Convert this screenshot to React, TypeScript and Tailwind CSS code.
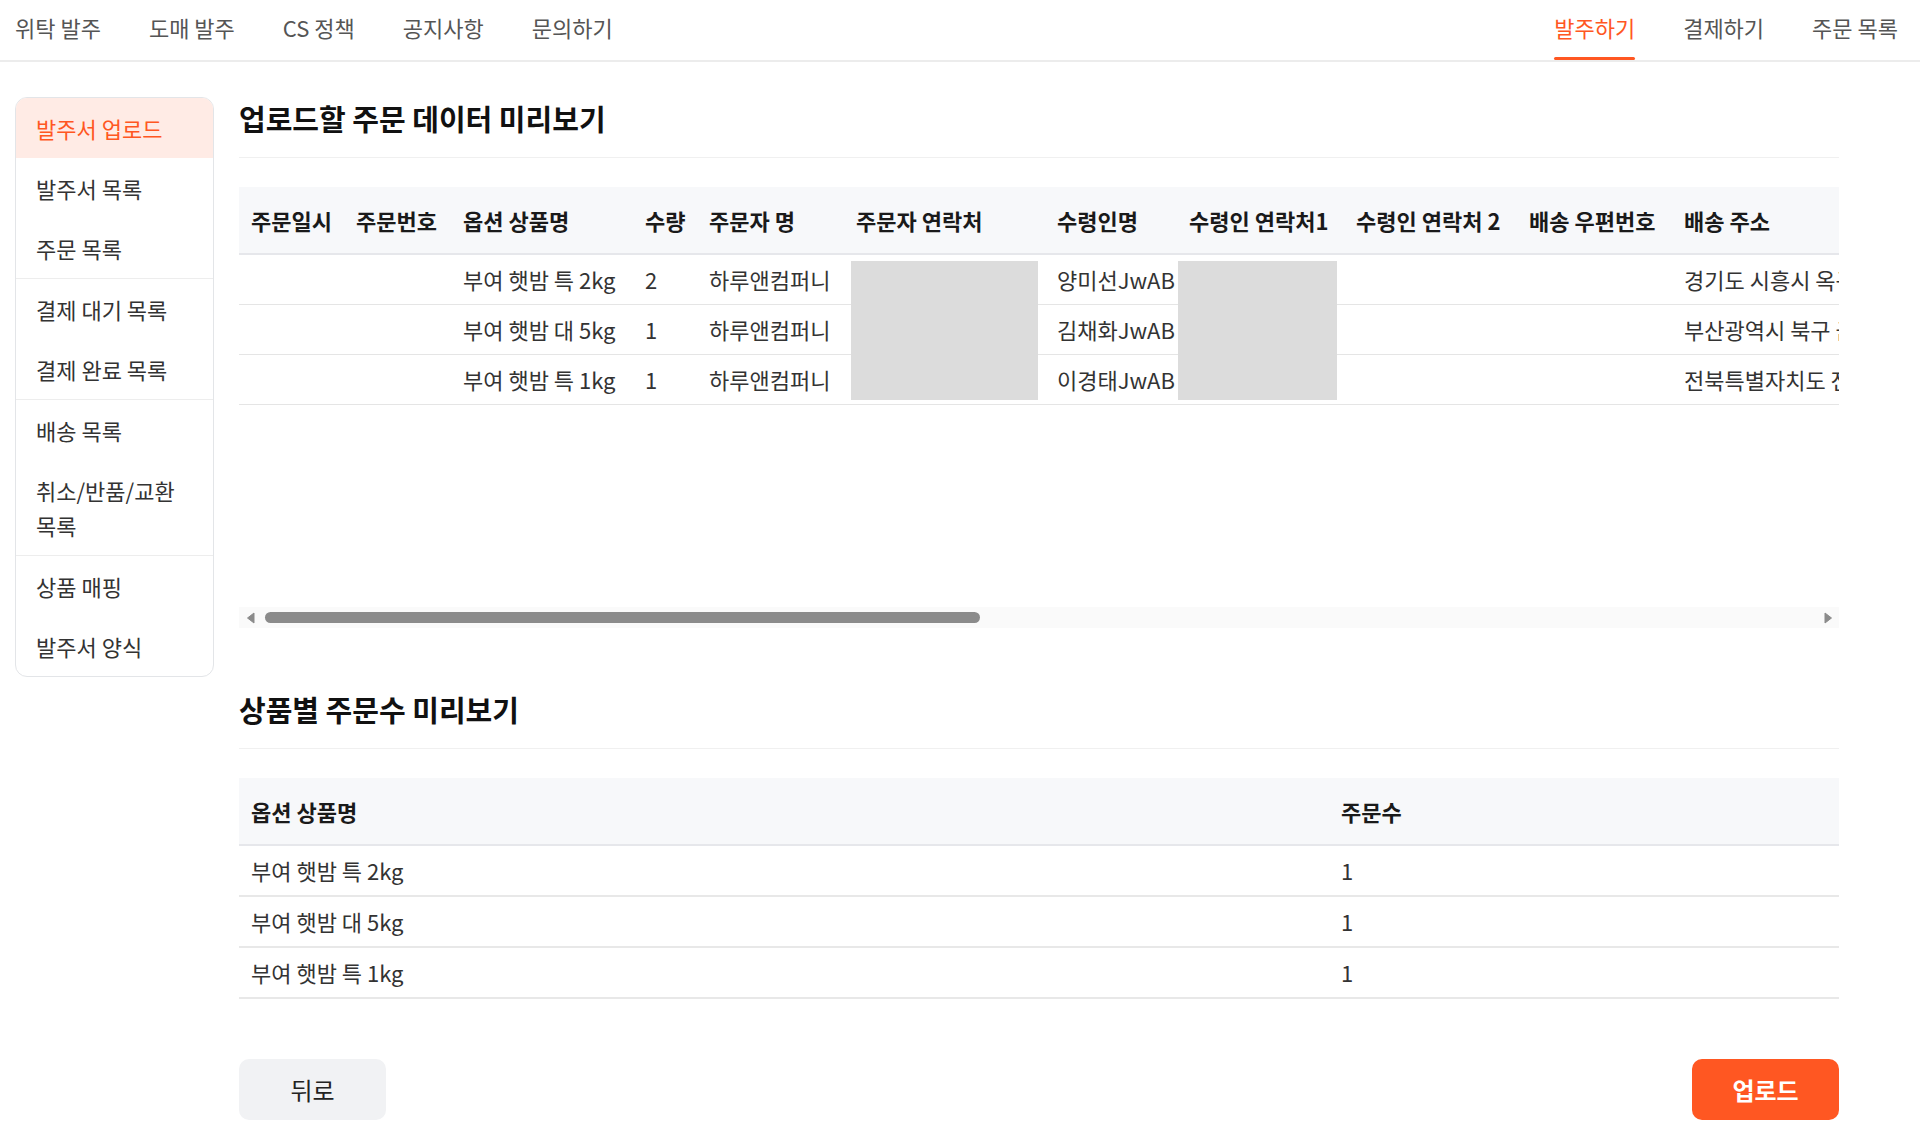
import React from 'react'

const FONT = { fontFamily: '"Noto Sans CJK KR", "Noto Sans", sans-serif' }

const leftNav = ['위탁 발주', '도매 발주', 'CS 정책', '공지사항', '문의하기']
const rightNav = ['발주하기', '결제하기', '주문 목록']

const sideGroups: string[][] = [
  ['발주서 업로드', '발주서 목록', '주문 목록'],
  ['결제 대기 목록', '결제 완료 목록'],
  ['배송 목록', '취소/반품/교환 목록'],
  ['상품 매핑', '발주서 양식'],
]

// 미리보기 테이블 컬럼 (폭은 px)
const columns = [
  { label: '주문일시', w: 'w-[105px]' },
  { label: '주문번호', w: 'w-[107px]' },
  { label: '옵션 상품명', w: 'w-[182px]' },
  { label: '수량', w: 'w-[64px]' },
  { label: '주문자 명', w: 'w-[147px]' },
  { label: '주문자 연락처', w: 'w-[201px]' },
  { label: '수령인명', w: 'w-[132px]' },
  { label: '수령인 연락처1', w: 'w-[167px]' },
  { label: '수령인 연락처 2', w: 'w-[173px]' },
  { label: '배송 우편번호', w: 'w-[155px]' },
  { label: '배송 주소', w: 'w-[420px]' },
  { label: '배송 메시지', w: 'w-[240px]' },
]

const rows = [
  ['', '', '부여 햇밤 특 2kg', '2', '하루앤컴퍼니', '', '양미선JwAB', '', '', '', '경기도 시흥시 옥구천서로 123', ''],
  ['', '', '부여 햇밤 대 5kg', '1', '하루앤컴퍼니', '', '김채화JwAB', '', '', '', '부산광역시 북구 금곡대로 45', ''],
  ['', '', '부여 햇밤 특 1kg', '1', '하루앤컴퍼니', '', '이경태JwAB', '', '', '', '전북특별자치도 전주시 완산구 67', ''],
]

const summary = [
  ['부여 햇밤 특 2kg', '1'],
  ['부여 햇밤 대 5kg', '1'],
  ['부여 햇밤 특 1kg', '1'],
]

function TopNav() {
  return (
    <div className="h-[62px] border-b-2 border-[#ececec] flex justify-between pl-[15px] pr-[22px]">
      <div className="flex gap-12">
        {leftNav.map((item) => (
          <span key={item} className="h-[60px] flex items-center pb-[6px] text-[22px] text-[#555]">
            {item}
          </span>
        ))}
      </div>
      <div className="flex gap-12">
        {rightNav.map((item, i) => (
          <span
            key={item}
            className={`relative h-[60px] flex items-center pb-[6px] text-[22px] ${
              i === 0 ? 'text-[#ff5722]' : 'text-[#555]'
            }`}
          >
            {item}
            {i === 0 && <span className="absolute left-0 right-0 bottom-0 h-[3px] rounded-full bg-[#ff5722]" />}
          </span>
        ))}
      </div>
    </div>
  )
}

function Sidebar() {
  return (
    <div className="w-[199px] self-start border border-[#e3e5e8] rounded-[12px] overflow-hidden bg-white">
      {sideGroups.map((group, gi) => (
        <div key={gi} className={gi > 0 ? 'border-t border-[#ededed]' : ''}>
          {group.map((item) => {
            const active = item === '발주서 업로드'
            return (
              <div
                key={item}
                className={`px-[20px] py-[12.5px] leading-[35px] text-[22px] break-keep ${
                  active ? 'bg-[#ffebe5] text-[#ff5722]' : 'text-[#333]'
                }`}
              >
                {item}
              </div>
            )
          })}
        </div>
      ))}
    </div>
  )
}

function Arrow({ dir }: { dir: 'left' | 'right' }) {
  return (
    <svg width="9" height="12" viewBox="0 0 9 12">
      {dir === 'left' ? (
        <path d="M8 1 L1.5 6 L8 11 Z" fill="#8b8b8b" stroke="#8b8b8b" strokeLinejoin="round" />
      ) : (
        <path d="M1 1 L7.5 6 L1 11 Z" fill="#8b8b8b" stroke="#8b8b8b" strokeLinejoin="round" />
      )}
    </svg>
  )
}

function OrderPreview() {
  return (
    <>
      <div className="relative h-[420px] mt-[29px] overflow-hidden">
        <div className="w-max">
          <div className="flex h-[68px] bg-[#f7f8fa] border-b-2 border-[#e6e7eb]">
            {columns.map((c) => (
              <div key={c.label} className={`${c.w} shrink-0 px-3 flex items-center whitespace-nowrap text-[22px] font-bold text-[#1a1a1a]`}>
                {c.label}
              </div>
            ))}
          </div>
          {rows.map((r, ri) => (
            <div key={ri} className="flex h-[50px] border-b border-[#e5e5e5]">
              {columns.map((c, ci) => (
                <div key={c.label} className={`${c.w} shrink-0 px-3 flex items-center whitespace-nowrap overflow-hidden text-[22px] text-[#333]`}>
                  {r[ci]}
                </div>
              ))}
            </div>
          ))}
        </div>
        {/* 개인정보 가림 처리 */}
        <div className="absolute left-[612px] top-[74px] w-[187px] h-[139px] bg-[#dcdcdc]" />
        <div className="absolute left-[939px] top-[74px] w-[159px] h-[139px] bg-[#dcdcdc]" />
      </div>

      <div className="h-[21px] bg-[#fafafa] flex items-center">
        <div className="w-[22px] flex justify-center">
          <Arrow dir="left" />
        </div>
        <div className="ml-[4px] w-[715px] h-[11px] rounded-full bg-[#8b8b8b]" />
        <div className="flex-1" />
        <div className="w-[22px] flex justify-center">
          <Arrow dir="right" />
        </div>
      </div>
    </>
  )
}

function SummaryTable() {
  return (
    <div className="mt-[29px]">
      <div className="flex h-[68px] bg-[#f7f8fa] border-b-2 border-[#e6e7eb]">
        <div className="w-[1090px] px-3 flex items-center text-[22px] font-bold text-[#1a1a1a]">옵션 상품명</div>
        <div className="flex-1 px-3 flex items-center text-[22px] font-bold text-[#1a1a1a]">주문수</div>
      </div>
      {summary.map(([name, count]) => (
        <div key={name} className="flex h-[51px] border-b-2 border-[#e8e8e8]">
          <div className="w-[1090px] px-3 flex items-center text-[22px] text-[#333]">{name}</div>
          <div className="flex-1 px-3 flex items-center text-[22px] text-[#333]">{count}</div>
        </div>
      ))}
    </div>
  )
}

export default function App() {
  return (
    <div className="min-h-screen bg-white" style={FONT}>
      <TopNav />
      <div className="flex pt-[35px] pl-[15px] gap-[25px]">
        <Sidebar />
        <div className="w-[1600px] flex flex-col">
          <h2 className="text-[29px] font-bold leading-[42px] pb-[18px] border-b border-[#f0f0f0] text-[#111]">
            업로드할 주문 데이터 미리보기
          </h2>
          <OrderPreview />

          <h2 className="mt-[60px] text-[29px] font-bold leading-[42px] pb-[18px] border-b border-[#f0f0f0] text-[#111]">
            상품별 주문수 미리보기
          </h2>
          <SummaryTable />

          <div className="mt-[60px] flex justify-between">
            <button className="w-[147px] h-[61px] rounded-[10px] bg-[#f1f2f4] text-[24px] text-[#222]">뒤로</button>
            <button className="w-[147px] h-[61px] rounded-[10px] bg-[#ff5722] text-[24px] font-bold text-white">업로드</button>
          </div>
        </div>
      </div>
    </div>
  )
}
